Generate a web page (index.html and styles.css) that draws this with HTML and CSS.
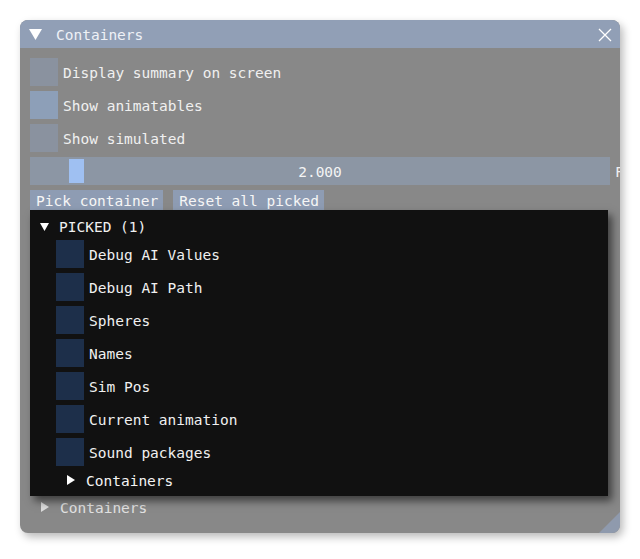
FILE: index.html
```html
<!DOCTYPE html>
<html>
<head>
<meta charset="utf-8">
<link rel="stylesheet" href="styles.css">
</head>
<body>
<div class="window">
  <div class="titlebar">
    <svg class="tri-title" width="13" height="11" viewBox="0 0 13 11"><polygon points="0,0 13,0 6.5,11" fill="#ffffff"/></svg>
    <span class="title">Containers</span>
    <svg class="close" width="14" height="14" viewBox="0 0 14 14"><path d="M1 1 L13 13 M13 1 L1 13" stroke="#ffffff" stroke-width="1.3" fill="none"/></svg>
  </div>
  <div class="content">
    <div class="row"><span class="check"></span><span class="label">Display summary on screen</span></div>
    <div class="row"><span class="check hover"></span><span class="label">Show animatables</span></div>
    <div class="row"><span class="check"></span><span class="label">Show simulated</span></div>
    <div class="slider-row">
      <div class="slider"><span class="grab"></span><span class="value">2.000</span></div>
      <span class="slider-label">F</span>
    </div>
    <div class="buttons">
      <span class="btn">Pick container</span>
      <span class="btn">Reset all picked</span>
    </div>
    <div class="panel">
      <div class="tree-head">
        <svg class="tri-down" width="9" height="8" viewBox="0 0 9 8"><polygon points="0,0 9,0 4.5,8" fill="#ffffff"/></svg>
        <span>PICKED (1)</span>
      </div>
      <div class="items">
        <div class="row"><span class="check dark"></span><span class="label">Debug AI Values</span></div>
        <div class="row"><span class="check dark"></span><span class="label">Debug AI Path</span></div>
        <div class="row"><span class="check dark"></span><span class="label">Spheres</span></div>
        <div class="row"><span class="check dark"></span><span class="label">Names</span></div>
        <div class="row"><span class="check dark"></span><span class="label">Sim Pos</span></div>
        <div class="row"><span class="check dark"></span><span class="label">Current animation</span></div>
        <div class="row"><span class="check dark"></span><span class="label">Sound packages</span></div>
        <div class="tree-closed inner">
          <svg width="8" height="10" viewBox="0 0 8 10"><polygon points="0,0 8,5 0,10" fill="#ffffff"/></svg>
          <span>Containers</span>
        </div>
      </div>
    </div>
    <div class="tree-closed outer">
      <svg width="8" height="10" viewBox="0 0 8 10"><polygon points="0,0 8,5 0,10" fill="#dcdcdc"/></svg>
      <span>Containers</span>
    </div>
  </div>
  <span class="grip"></span>
</div>
</body>
</html>
```

FILE: styles.css
```css
html, body {
  margin: 0;
  padding: 0;
  background: #ffffff;
}
body {
  padding: 20px;
  font-family: "DejaVu Sans Mono", "Liberation Mono", monospace;
  font-size: 14.5px;
  color: #f0f0f0;
}
.window {
  position: relative;
  width: 600px;
  height: 513px;
  background: #888888;
  border-radius: 8px;
  overflow: hidden;
  box-shadow: 3px 4px 8px rgba(0,0,0,0.28);
}
.titlebar {
  height: 28px;
  background: #919fb6;
  display: flex;
  align-items: center;
  padding-left: 9px;
  padding-right: 8px;
}
.tri-title {
  margin-top: 1px;
}
.title {
  margin-left: 14px;
  padding-top: 2px;
  color: #eef1f6;
  flex: 1;
}
.close {
  margin-top: 1px;
}
.content {
  padding: 10px 0 0 10px;
  display: flex;
  flex-direction: column;
}
.row {
  display: flex;
  align-items: center;
  height: 28px;
  margin-bottom: 5px;
}
.check {
  width: 28px;
  height: 28px;
  background: #8a929f;
  flex: none;
}
.check.hover {
  background: #8d9fb8;
}
.check.dark {
  background: #1d2f4a;
}
.label {
  margin-left: 5px;
  padding-top: 2px;
  white-space: nowrap;
}
.slider-row {
  display: flex;
  align-items: center;
  height: 28px;
  width: 600px;
}
.slider {
  position: relative;
  width: 580px;
  height: 28px;
  background: #8c96a4;
  display: flex;
  align-items: center;
  justify-content: center;
  flex: none;
}
.grab {
  position: absolute;
  left: 39px;
  top: 2px;
  width: 15px;
  height: 24px;
  background: #9fc0f2;
}
.value {
  color: #f4f4f4;
  padding-top: 2px;
}
.slider-label {
  margin-left: 5px;
  padding-top: 2px;
  color: #f0f0f0;
}
.buttons {
  display: flex;
  gap: 10px;
  margin-top: 5px;
  height: 20px;
}
.btn {
  background: #8e9cb3;
  height: 20px;
  line-height: 22px;
  padding: 0 5px 0 6px;
  color: #f6f6f6;
  white-space: nowrap;
}
.panel {
  width: 578px;
  height: 286px;
  background: #111111;
  box-shadow: 4px 5px 8px rgba(0,0,0,0.55);
  padding: 7px 0 0 10px;
  box-sizing: border-box;
  position: relative;
  z-index: 1;
}
.tree-head {
  display: flex;
  align-items: center;
  height: 18px;
}
.tree-head span {
  margin-left: 10px;
  padding-top: 1px;
}
.tri-down {
  margin-top: 1px;
}
.items {
  padding-left: 16px;
  margin-top: 5px;
}
.tree-closed {
  display: flex;
  align-items: center;
  height: 18px;
}
.tree-closed.inner {
  margin-left: 11px;
  margin-top: 3px;
}
.tree-closed.inner span {
  margin-left: 11px;
  padding-top: 2px;
  color: #f4f4f4;
}
.tree-closed.outer {
  margin-left: 11px;
  margin-top: 2px;
}
.tree-closed.outer span {
  margin-left: 11px;
  padding-top: 1px;
  color: #e2e2e2;
}
.grip {
  position: absolute;
  right: 0;
  bottom: 0;
  width: 0;
  height: 0;
  border-left: 21px solid transparent;
  border-bottom: 21px solid #8f9aad;
}
```
